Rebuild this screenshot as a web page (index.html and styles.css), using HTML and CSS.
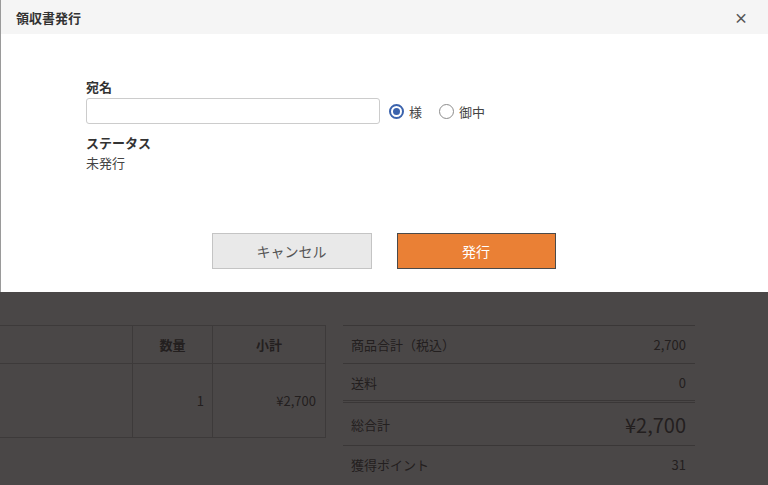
FILE: index.html
```html
<!DOCTYPE html>
<html lang="ja">
<head>
<meta charset="utf-8">
<title>領収書発行</title>
<link rel="stylesheet" href="styles.css">
</head>
<body>
<div class="page">
  <table class="items">
    <thead>
      <tr><th class="c-name"></th><th class="c-qty">数量</th><th class="c-sub">小計</th></tr>
    </thead>
    <tbody>
      <tr><td class="c-name"></td><td class="c-qty num">1</td><td class="c-sub num">¥2,700</td></tr>
    </tbody>
  </table>
  <table class="summary">
    <tr><td>商品合計（税込）</td><td class="num">2,700</td></tr>
    <tr><td>送料</td><td class="num">0</td></tr>
    <tr class="total"><td>総合計</td><td class="num big">¥2,700</td></tr>
    <tr><td>獲得ポイント</td><td class="num">31</td></tr>
  </table>
</div>
<div class="overlay"></div>
<div class="modal">
  <div class="modal-head">
    <span class="modal-title">領収書発行</span>
    <span class="close">×</span>
  </div>
  <div class="modal-body">
    <div class="field-label">宛名</div>
    <div class="name-row">
      <input class="name-input" type="text">
      <label class="radio"><span class="dot checked"></span>様</label>
      <label class="radio"><span class="dot"></span>御中</label>
    </div>
    <div class="field-label status-label">ステータス</div>
    <div class="status-value">未発行</div>
    <div class="actions">
      <button class="btn btn-cancel">キャンセル</button>
      <button class="btn btn-issue">発行</button>
    </div>
  </div>
</div>
</body>
</html>
```
FILE: styles.css
```css
* { box-sizing: border-box; }
html, body { margin: 0; padding: 0; }
body {
  width: 768px;
  height: 485px;
  overflow: hidden;
  font-family: "Noto Sans CJK JP", "Noto Sans", sans-serif;
  font-size: 13px;
  color: #333;
  background: #fff;
  position: relative;
}
.page {
  display: flex;
  align-items: flex-start;
  padding-top: 325px;
  gap: 17px;
}
table { border-collapse: collapse; }
.items { width: 327px; margin-left: -1px; }
.items th, .items td {
  border: 1px solid #cfcfcf;
  color: #747070;
}
.items th { height: 38px; font-weight: bold; text-align: center; }
.items td { height: 74px; }
.items .c-name { width: 133px; }
.items .c-qty { width: 80px; }
.items td.c-qty { padding-right: 8px; }
.items td.c-sub { padding-right: 9px; }
.num { text-align: right; }
.summary { width: 352px; }
.summary td {
  border-top: 1px solid #c6c6c6;
  height: 38px;
  padding: 0 8px;
  color: #747070;
}
.summary td.num { padding-right: 9px; }
.summary tr.total td { border-top: 3px double #c6c6c6; height: 44px; }
.summary .big { font-size: 20px; }
.overlay {
  position: absolute;
  inset: 0;
  background: rgba(4, 0, 0, 0.72);
}
.modal {
  position: absolute;
  left: 0;
  top: 0;
  width: 768px;
  background: #fff;
  border-left: 1px solid #9a9a9a;
}
.modal-head {
  height: 34px;
  background: #f5f5f5;
  display: flex;
  align-items: center;
  justify-content: space-between;
  padding: 0 20px 0 15px;
}
.modal-title { font-weight: bold; font-size: 13px; color: #333; }
.close { font-size: 14px; font-weight: bold; color: #555; line-height: 1; }
.modal-body {
  padding: 44px 0 23px 85px;
}
.field-label { font-weight: bold; line-height: 18px; color: #333; }
.name-row {
  display: flex;
  align-items: center;
  margin-top: 2px;
}
.name-input {
  width: 294px;
  height: 26px;
  border: 1px solid #cccccc;
  border-radius: 3px;
  margin: 0;
  padding: 0 6px;
}
.radio {
  display: flex;
  align-items: center;
  gap: 5px;
  color: #444;
  font-size: 13px;
}
.radio:first-of-type { margin-left: 9px; }
.radio + .radio { margin-left: 17px; }
.dot {
  width: 15px;
  height: 15px;
  border-radius: 50%;
  border: 1.5px solid #8c8c8c;
  background: #fff;
  position: relative;
}
.dot.checked { border: 2px solid #3b63ad; }
.dot.checked::after {
  content: "";
  position: absolute;
  left: 2px;
  top: 2px;
  width: 7px;
  height: 7px;
  border-radius: 50%;
  background: #3b63ad;
}
.status-label { margin-top: 10px; }
.status-value { line-height: 18px; margin-top: 2px; color: #444; }
.actions {
  display: flex;
  justify-content: center;
  gap: 25px;
  margin-top: 61px;
  margin-left: -87px;
}
.btn {
  width: 160px;
  height: 36px;
  font-family: inherit;
  font-size: 14px;
  margin: 0;
}
.btn-cancel { background: #e9e9e9; border: 1.5px solid #c4c4c4; color: #555; }
.btn-issue { width: 159px; background: #ea8035; border: 1px solid #4a4a4a; color: #fff; }
```
